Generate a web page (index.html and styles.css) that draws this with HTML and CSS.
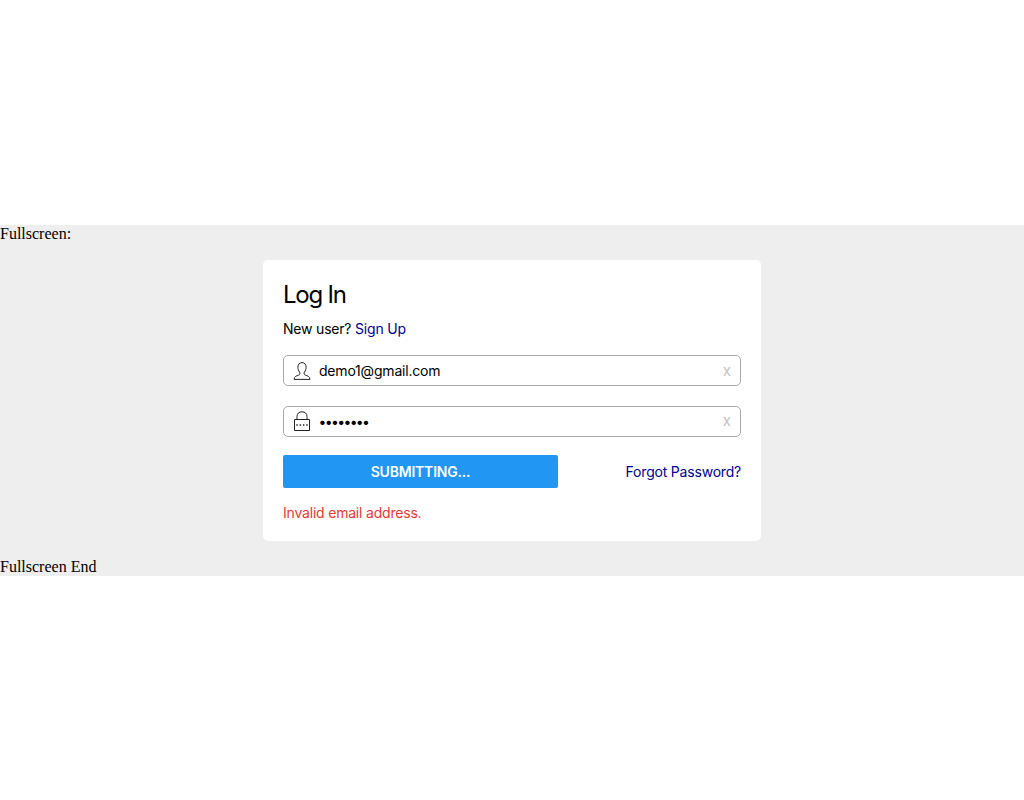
FILE: index.html
```html
<!DOCTYPE html>
<html lang="en">
<head>
<meta charset="utf-8">
<title>Log In</title>
<link rel="stylesheet" href="styles.css">
</head>
<body>
<main class="fullscreen">
  <div class="label">Fullscreen:</div>
  <form class="card">
    <h1 class="title">Log In</h1>
    <p class="signup">New user? <a class="link" href="#">Sign Up</a></p>
    <div class="field">
      <svg class="icon" viewBox="0 0 18 20" fill="none" stroke="#222" stroke-width="1">
        <path d="M6.6 11.1C5.4 9.6 4.9 8 4.9 6.2C4.9 3.4 6.3 1.6 9 1.6S13.1 3.4 13.1 6.2C13.1 8 12.6 9.6 11.4 11.1C10.8 12.3 11 13.6 12.2 14.1C14.4 14.9 16.9 15.2 16.9 18.4H1.1C1.1 15.2 3.6 14.9 5.8 14.1C7 13.6 7.2 12.3 6.6 11.1Z"/>
      </svg>
      <span class="value email">demo1@gmail.com</span>
      <span class="clear">x</span>
    </div>
    <div class="field">
      <svg class="icon lock" viewBox="0 0 18 20" fill="none" stroke="#222" stroke-width="1">
        <path d="M1.5 8.5H16.5V19.5H1.5ZM4 8.5V5.5C4 2.5 6 .8 9 .8S14 2.5 14 5.5V8.5"/>
        <path d="M3.3 14H4.8M6.6 14H8.1M9.9 14H11.4M13.2 14H14.7" stroke-width="1.5"/>
      </svg>
      <span class="value dots">••••••••</span>
      <span class="clear raised">x</span>
    </div>
    <div class="actions">
      <button class="submit" type="button">SUBMITTING...</button>
      <a class="link forgot" href="#">Forgot Password?</a>
    </div>
    <p class="error">Invalid email address.</p>
  </form>
  <div class="label">Fullscreen End</div>
</main>
</body>
</html>
```

FILE: styles.css
```css
* { box-sizing: border-box; }
body {
  margin: 0;
  height: 800px;
  display: flex;
  flex-direction: column;
  justify-content: center;
  background: #fff;
  color: #000;
}
.fullscreen {
  height: 351px;
  margin-top: 1px;
  display: flex;
  flex-direction: column;
  justify-content: space-between;
  background: #eee;
}
.label { font: 16px/18px "Liberation Serif", serif; }
.card {
  width: 498px;
  height: 281px;
  margin: 0 auto;
  padding: 20px;
  background: #fff;
  border-radius: 5px;
  font: 14px/16px Inter, sans-serif;
  letter-spacing: -0.2px;
}
.title { margin: 0; font-size: 24px; line-height: 30px; font-weight: 400; letter-spacing: -1.25px; }
.signup { margin: 11px 0 18px; }
.link { color: #00008b; text-decoration: none; }
.field {
  display: flex;
  align-items: center;
  height: 31px;
  margin-bottom: 20px;
  padding: 0 9px;
  border: 1px solid #a9a9a9;
  border-radius: 5px;
}
.icon { flex: none; width: 18px; height: 20px; margin-right: 8px; }
.lock { margin-bottom: 2px; }
.value { flex: 1; }
.dots { letter-spacing: -1.65px; margin-left: -0.5px; }
.clear { color: #c3c3c3; font-size: 15px; letter-spacing: 0; }
.raised { margin-bottom: 2px; }
.actions {
  display: flex;
  align-items: center;
  justify-content: space-between;
  margin-top: -2px;
}
.submit {
  width: 275px;
  height: 33px;
  padding: 0;
  border: 0;
  border-radius: 2px;
  background: #2196f3;
  color: #fff;
  font: 600 14px/16px Inter, sans-serif;
  letter-spacing: -0.2px;
}
.error { margin: 17px 0 0; color: #e53935; }
```
